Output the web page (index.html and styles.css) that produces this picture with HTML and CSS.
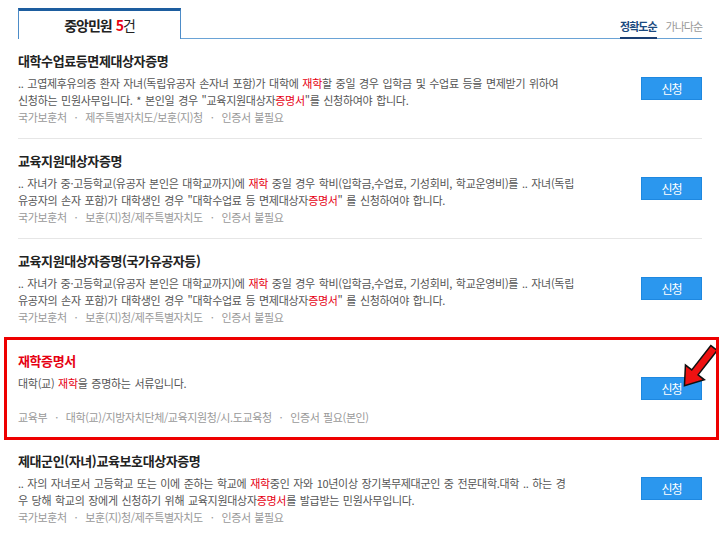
FILE: index.html
```html
<!DOCTYPE html>
<html lang="ko">
  <head>
    <meta charset="UTF-8" />
    <meta name="viewport" content="width=device-width, initial-scale=1.0" />
    <title>중앙민원 검색결과</title>
    <link rel="stylesheet" href="styles.css">
  </head>
  <body>
    <div class="container">
      <!-- 탭 + 정렬 -->
      <div class="tab-bar">
        <div class="tab">중앙민원 <em>5</em><span class="unit">건</span></div>
        <div class="sort">
          <a class="sort-item active">정확도순</a>
          <a class="sort-item">가나다순</a>
        </div>
      </div>

      <!-- 민원 목록 -->
      <ul class="list">
        <li class="item">
          <div class="info">
            <h3 class="title">대학수업료등면제대상자증명</h3>
            <p class="desc">.. 고엽제후유의증 환자 자녀(독립유공자 손자녀 포함)가 대학에 <em>재학</em>할 중일 경우 입학금 및 수업료 등을 면제받기 위하여<br>신청하는 민원사무입니다. * 본인일 경우 "교육지원대상자<em>증명서</em>"를 신청하여야 합니다.</p>
            <p class="meta"><span>국가보훈처</span><span>제주특별자치도/보훈(지)청</span><span>인증서 불필요</span></p>
          </div>
          <button class="btn">신청</button>
        </li>
        <li class="item">
          <div class="info">
            <h3 class="title">교육지원대상자증명</h3>
            <p class="desc">.. 자녀가 중·고등학교(유공자 본인은 대학교까지)에 <em>재학</em> 중일 경우 학비(입학금,수업료, 기성회비, 학교운영비)를 .. 자녀(독립<br>유공자의 손자 포함)가 대학생인 경우 "대학수업료 등 면제대상자<em>증명서</em>" 를 신청하여야 합니다.</p>
            <p class="meta"><span>국가보훈처</span><span>보훈(지)청/제주특별자치도</span><span>인증서 불필요</span></p>
          </div>
          <button class="btn">신청</button>
        </li>
        <li class="item">
          <div class="info">
            <h3 class="title">교육지원대상자증명(국가유공자등)</h3>
            <p class="desc">.. 자녀가 중·고등학교(유공자 본인은 대학교까지)에 <em>재학</em> 중일 경우 학비(입학금,수업료, 기성회비, 학교운영비)를 .. 자녀(독립<br>유공자의 손자 포함)가 대학생인 경우 "대학수업료 등 면제대상자<em>증명서</em>" 를 신청하여야 합니다.</p>
            <p class="meta"><span>국가보훈처</span><span>보훈(지)청/제주특별자치도</span><span>인증서 불필요</span></p>
          </div>
          <button class="btn">신청</button>
        </li>
        <li class="item highlight">
          <div class="info">
            <h3 class="title">재학증명서</h3>
            <p class="desc">대학(교) <em>재학</em>을 증명하는 서류입니다.</p>
            <p class="meta"><span>교육부</span><span>대학(교)/지방자치단체/교육지원청/시.도교육청</span><span>인증서 필요(본인)</span></p>
          </div>
          <button class="btn">신청</button>
          <!-- 강조 화살표 -->
          <svg class="arrow" width="44" height="52" viewBox="0 0 44 52">
            <polygon transform="translate(36 5) rotate(128)" points="0,-4 31,-4 31,-12 48,0 31,12 31,4 0,4" fill="#ee1111" stroke="#111" stroke-width="1.5" stroke-linejoin="miter" />
          </svg>
        </li>
        <li class="item">
          <div class="info">
            <h3 class="title">제대군인(자녀)교육보호대상자증명</h3>
            <p class="desc">.. 자의 자녀로서 고등학교 또는 이에 준하는 학교에 <em>재학</em>중인 자와 10년이상 장기복무제대군인 중 전문대학.대학 .. 하는 경<br>우 당해 학교의 장에게 신청하기 위해 교육지원대상자<em>증명서</em>를 발급받는 민원사무입니다.</p>
            <p class="meta"><span>국가보훈처</span><span>보훈(지)청/제주특별자치도</span><span>인증서 불필요</span></p>
          </div>
          <button class="btn">신청</button>
        </li>
      </ul>
    </div>
  </body>
</html>
```

FILE: styles.css
```css
body {
  margin: 0;
  padding: 0;
  background-color: #fff;
  font-family: "Noto Sans CJK KR", "Noto Sans", sans-serif;
  color: #333;
}
.container {
  padding: 8px 18px 0;
}
.tab-bar {
  display: flex;
  justify-content: space-between;
  align-items: flex-end;
  border-bottom: 1px solid #6aa3d6;
}
.tab {
  width: 161px;
  height: 28px;
  margin-bottom: -1px;
  border-top: 3px solid #1d5d9f;
  border-left: 1px solid #4d8cc8;
  border-right: 1px solid #4d8cc8;
  background-color: #fff;
  display: flex;
  justify-content: center;
  align-items: center;
  font-size: 14px;
  font-weight: bold;
  letter-spacing: -1px;
  color: #222;
}
.tab em {
  font-style: normal;
  color: #e60012;
  margin-left: 4px;
}
.tab .unit {
  font-weight: normal;
}
.sort {
  display: flex;
  gap: 9px;
}
.sort-item {
  font-size: 11px;
  letter-spacing: -1px;
  color: #999;
  line-height: 16px;
  padding-bottom: 5px;
  margin-bottom: -1px;
}
.sort-item.active {
  color: #1b4a80;
  font-weight: bold;
  border-bottom: 2px solid #1b3f73;
  padding-bottom: 3px;
}
.list {
  list-style: none;
  margin: 0;
  padding: 0;
}
.item {
  position: relative;
  display: flex;
  align-items: center;
  justify-content: space-between;
  padding: 12px 0;
  border-bottom: 1px solid #e6e6e6;
}
.title {
  margin: 0 0 4px;
  font-size: 13px;
  line-height: 20px;
  letter-spacing: -0.4px;
  color: #222;
}
.desc {
  margin: 0;
  min-height: 34px;
  font-size: 11px;
  line-height: 17px;
  letter-spacing: -0.3px;
  word-spacing: 1px;
  color: #555;
}
.desc em {
  font-style: normal;
  color: #e60012;
}
.meta {
  margin: 0;
  font-size: 11px;
  line-height: 17px;
  letter-spacing: -0.4px;
  word-spacing: 1px;
  color: #999;
}
.meta span + span::before {
  content: "·";
  margin: 0 8px 0 8px;
}
.btn {
  width: 61px;
  height: 23px;
  padding: 0;
  border: 1px solid #1e88e0;
  background-color: #2b97ee;
  color: #fff;
  font-family: inherit;
  font-size: 12px;
  letter-spacing: -1px;
  cursor: pointer;
}
/* 빨간 강조 박스 */
.highlight .title {
  color: #e60012;
}
.highlight::after {
  content: "";
  position: absolute;
  left: -14px;
  right: -17px;
  top: -2px;
  bottom: -2px;
  border: 3px solid #ee0000;
  pointer-events: none;
}
.arrow {
  position: absolute;
  left: 660px;
  top: 4px;
}
```
